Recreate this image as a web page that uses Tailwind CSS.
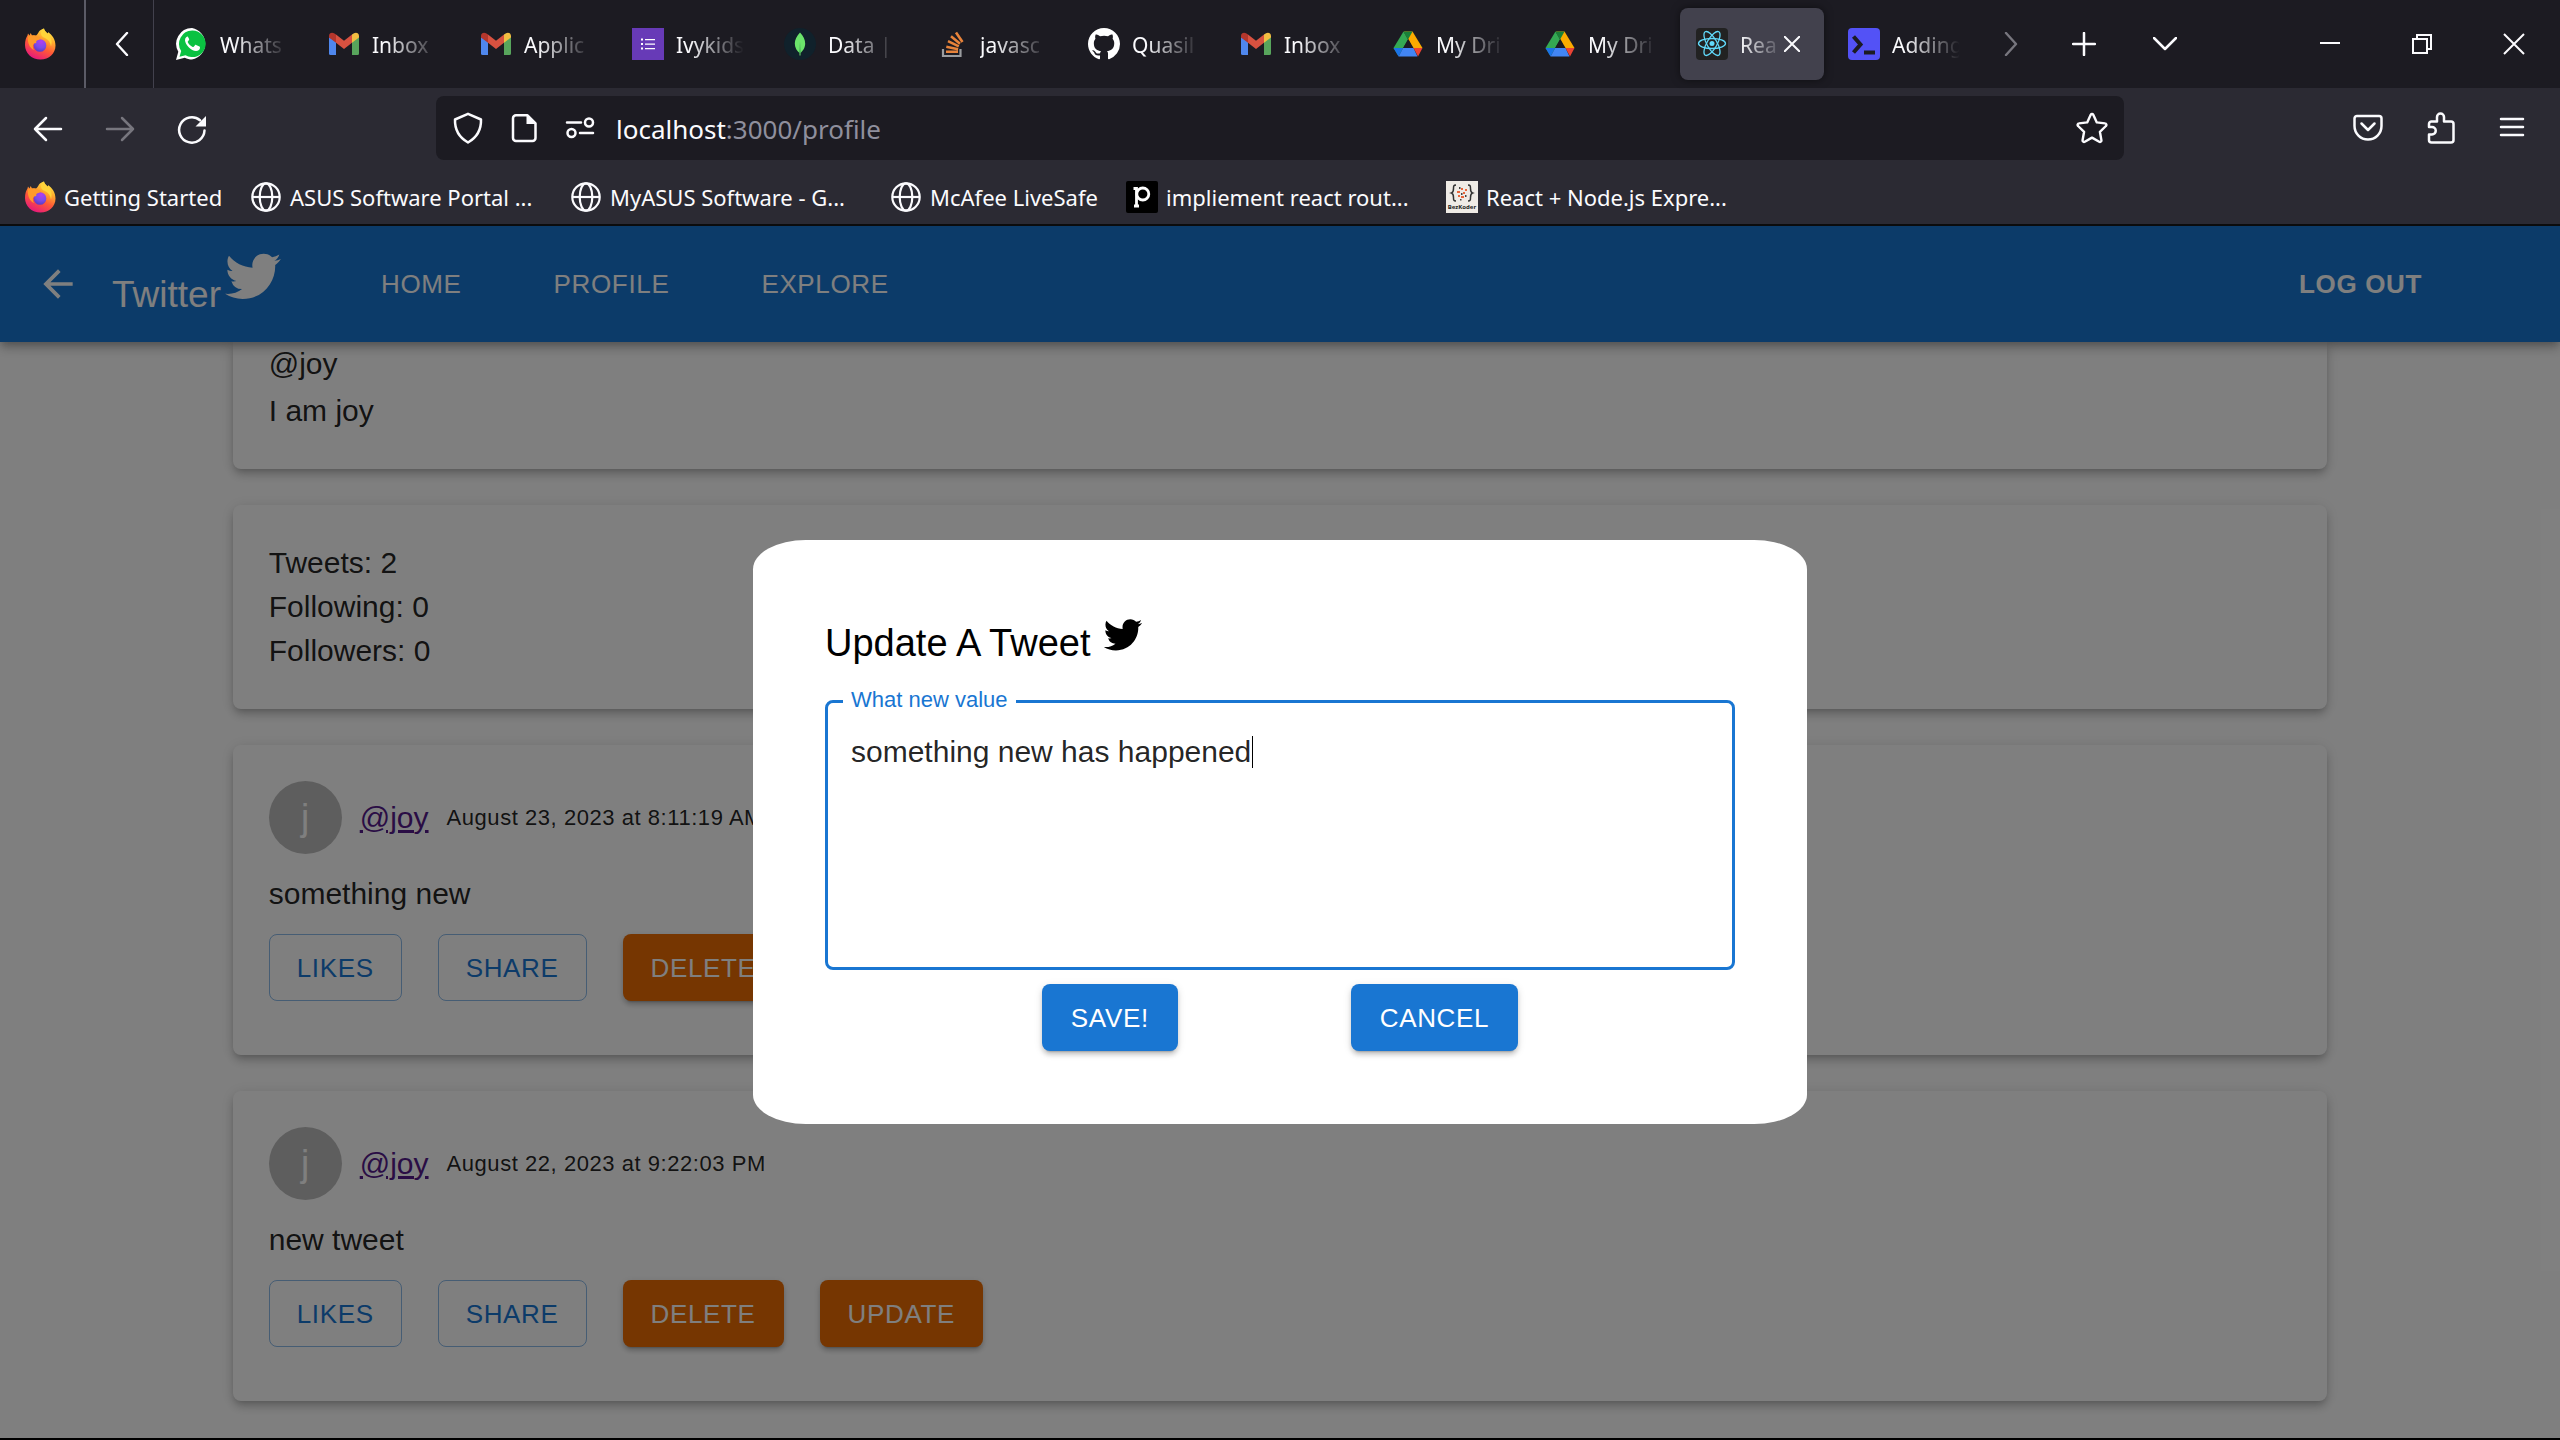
<!DOCTYPE html>
<html lang="en">
<head>
<meta charset="utf-8">
<title>React App</title>
<script src="https://cdn.jsdelivr.net/npm/@tailwindcss/browser@4"></script>
</head>
<body class="flex h-screen flex-col overflow-hidden bg-black font-['Liberation_Sans',Arial,sans-serif]">

<svg class="absolute size-0" aria-hidden="true">
  <defs>
    <linearGradient id="ff-body" x1="0.8" y1="0" x2="0.3" y2="1">
      <stop offset="0" stop-color="#fff44f"/><stop offset="0.3" stop-color="#ffb02e"/><stop offset="0.6" stop-color="#ff5a36"/><stop offset="1" stop-color="#e5157f"/>
    </linearGradient>
    <radialGradient id="ff-core" cx="0.6" cy="0.2" r="0.8">
      <stop offset="0" stop-color="#b23df0"/><stop offset="0.6" stop-color="#7a4be8"/><stop offset="1" stop-color="#5b3bc4"/>
    </radialGradient>
  </defs>
  <symbol id="firefox" viewBox="0 0 32 32">
    <path fill="url(#ff-body)" d="M20 .5c.3 2 1.800 3.300 3.500 5 .6-.4.700-1 .6-1.600 4 2.800 7.400 7.500 7.400 13.600C31.500 25.500 25 31.500 16.500 31.500S1 25.500 1 17c0-4.500 1.200-7.500 2.500-9.500l.5-2 1.500 2 1.200-2.500L8 7.500C9.500 7 11 7 12 7.500c1.500-.8 2-2.500 3-4 1-1.500 3-2.500 5-3z"/>
    <circle cx="16" cy="17.500" r="6.300" fill="url(#ff-core)"/>
    <path fill="#ff9a2a" d="M4 8.500c3-1.500 6-1.500 8.500 0 2 .3 3.500.3 4.500 1.200-.3 1.800-2.500 2-4 2.700-1 .5-1 1.800-.5 2.600-1.500-.2-3 .5-3.500 2-.4 1.500 0 3.500 1 5C6 20.500 3 14.500 4 8.500z"/>
    <path fill="#ffd43a" d="M20 .5c.3 2 1.800 3.500 3.500 5 4 3.500 5 8 3.500 13-.5-4-2.500-7-6-8.500-2.500-1-4-2.500-4-4.500 0-2.200 1-4 3-5z"/>
  </symbol>
  <symbol id="gmail" viewBox="0 0 32 32">
    <path fill="#4f87ed" d="M1 9v16.500a1.500 1.500 0 0 0 1.500 1.500H8V13.500z"/>
    <path fill="#58a55c" d="M31 9v16.500a1.500 1.500 0 0 1-1.500 1.500H24V13.500z"/>
    <path fill="#d75140" d="M8 6.500l8 6.300 8-6.300v8.300l-8 6.300-8-6.300z"/>
    <path fill="#b3362c" d="M1 9.500V8c0-3 3-4 5-2.700L8 6.500v8.300z"/>
    <path fill="#f2be42" d="M31 9.500V8c0-3-3-4-5-2.700l-2 1.200v8.300z"/>
  </symbol>
  <symbol id="drive" viewBox="0 0 32 32">
    <path fill="#fbab00" d="M20.500 3.500L30.500 20h-9L12 3.500z" />
    <path fill="#34a853" d="M11.500 3.500L16 11.500 6.500 28 1.500 20z"/>
    <path fill="#188038" d="M11.500 3.500h9L16 11.500z"/>
    <path fill="#1c1b22" d="M16 11.500L20.800 20h-9.600z"/>
    <path fill="#4285f4" d="M11 20h10.500l4 8.500h-19z"/>
    <path fill="#1a73e8" d="M1.500 20H11l-4.500 8.500z"/>
    <path fill="#ea4335" d="M30.500 20h-9l4.500 8.500z"/>
  </symbol>
  <symbol id="globe" viewBox="0 0 32 32">
    <g fill="none" stroke="#fbfbfe" stroke-width="2.200"><circle cx="16" cy="16" r="13.700"/><ellipse cx="16" cy="16" rx="6.300" ry="13.700"/><path d="M2.500 16h27"/></g>
  </symbol>
  <symbol id="bird" viewBox="0 0 24 24">
    <path d="M22.460 6c-.77.35-1.600.58-2.460.69.88-.53 1.560-1.370 1.880-2.380-.83.5-1.750.85-2.720 1.050C18.370 4.500 17.260 4 16 4c-2.350 0-4.270 1.920-4.270 4.290 0 .34.04.67.11.98C8.280 9.090 5.110 7.380 3 4.790c-.37.63-.58 1.370-.58 2.150 0 1.490.75 2.810 1.910 3.560-.71 0-1.370-.2-1.950-.5v.03c0 2.080 1.480 3.820 3.440 4.210a4.220 4.220 0 0 1-1.930.07 4.280 4.280 0 0 0 4 2.980 8.521 8.521 0 0 1-5.330 1.840c-.34 0-.68-.02-1.020-.06C3.440 20.290 5.700 21 8.120 21 16 21 20.330 14.460 20.330 8.790c0-.19 0-.37-.01-.56.84-.6 1.560-1.360 2.140-2.230z"/>
  </symbol>
</svg>

<!-- Browser window: tab strip, address bar, bookmarks -->
<header class="shrink-0 border-b-2 border-[#0c0c0d] bg-[#2b2a33] font-['Noto_Sans','Open_Sans',sans-serif] text-[#fbfbfe]">
  <div class="flex h-[88px] items-stretch bg-[#1c1b22]">
    <button class="flex w-[86px] items-center border-r-2 border-[#5b5b66] pl-6" aria-label="Firefox View"><svg class="size-8"><use href="#firefox"/></svg></button>
    <button class="flex w-[68px] items-center justify-center border-r border-[#42414d] pl-1" aria-label="Scroll tabs left"><svg class="h-6 w-4" viewBox="0 0 16 24" fill="none" stroke="currentColor" stroke-width="2.400" stroke-linecap="round" stroke-linejoin="round"><path d="M13 1L3 12l10 11"/></svg></button>
    <nav class="ml-1.5 flex items-center gap-2 text-[21px] leading-8" aria-label="Tabs">
      <a href="#" class="flex h-[72px] w-36 items-center gap-3 pl-4">
        <svg class="size-8 shrink-0" viewBox="0 0 32 32"><path fill="#fff" d="M16 0a16 16 0 0 1 0 31.500c-2.600 0-5-.6-7.200-1.800L0 32l2.300-8.300A15.800 15.800 0 0 1 16 0z"/><path fill="#0ac241" d="M16.200 2.500a13.300 13.300 0 1 1-6.700 24.700l-6 1.500 1.700-5.700A13.300 13.300 0 0 1 16.200 2.500z"/><path fill="#fff" d="M11.600 8.500c-.8 0-2.600 1.200-2.600 3.800 0 4 6.300 10.800 11 10.800 2.500 0 4-1.500 4-3.600 0-.6-.2-.8-.6-1l-3.300-1.600c-.5-.2-.8-.1-1.100.3l-1.300 1.600c-.3.3-.6.3-1 .1-2.200-1-3.900-2.700-4.900-4.600-.2-.4-.1-.7.2-1l1-1.300c.2-.3.200-.6.100-.9l-1.200-2.300c-.1-.3-.2-.3-.3-.3z"/></svg>
        <span class="w-[68px] pt-0.5 whitespace-nowrap mask-r-from-20% mask-r-to-100%">Whats</span></a>
      <a href="#" class="flex h-[72px] w-36 items-center gap-3 pl-4"><svg class="size-8 shrink-0"><use href="#gmail"/></svg><span class="w-[68px] pt-0.5 whitespace-nowrap mask-r-from-20% mask-r-to-100%">Inbox</span></a>
      <a href="#" class="flex h-[72px] w-36 items-center gap-3 pl-4"><svg class="size-8 shrink-0"><use href="#gmail"/></svg><span class="w-[68px] pt-0.5 whitespace-nowrap mask-r-from-20% mask-r-to-100%">Applic</span></a>
      <a href="#" class="flex h-[72px] w-36 items-center gap-3 pl-4">
        <svg class="size-8 shrink-0" viewBox="0 0 32 32"><path fill="#673ab7" d="M0 0h32v32H0z"/><path fill="#fff" d="M9 10.500h2v2H9zM9 15h2v2H9zM9 19.500h2v2H9zM13 11h10v1.300H13zM13 15.500h10v1.300H13zM13 20h10v1.300H13z"/></svg>
        <span class="w-[68px] pt-0.5 whitespace-nowrap mask-r-from-20% mask-r-to-100%">Ivykids</span></a>
      <a href="#" class="flex h-[72px] w-36 items-center gap-3 pl-4">
        <svg class="size-8 shrink-0" viewBox="0 0 32 32"><circle cx="16" cy="16" r="16" fill="#10212b"/><path fill="#6be46b" d="M16 4.500c3.500 4 5.200 7 5.200 11 0 4.500-2.500 7.500-4.700 9.500V27.500h-1V25c-2.400-2-4.700-5-4.700-9.500 0-4 1.900-7 5.200-11z"/><path fill="#3a9a52" d="M16 14l.6 11h-1.200z"/></svg>
        <span class="w-[68px] pt-0.5 whitespace-nowrap mask-r-from-20% mask-r-to-100%">Data |</span></a>
      <a href="#" class="flex h-[72px] w-36 items-center gap-3 pl-4">
        <svg class="size-8 shrink-0" viewBox="0 0 32 32"><path fill="none" stroke="#9a9c9f" stroke-width="2.200" d="M7 21v7h17.500v-7"/><g stroke="#e8833a" stroke-width="2.600"><path d="M10 23.700h12M10.300 18.800l11.800 2.400M12 13.200l10.800 5.200M15 8.300l9 7.400M20 4.500l6.500 9.500"/></g></svg>
        <span class="w-[68px] pt-0.5 whitespace-nowrap mask-r-from-20% mask-r-to-100%">javasc</span></a>
      <a href="#" class="flex h-[72px] w-36 items-center gap-3 pl-4">
        <svg class="size-8 shrink-0" viewBox="0 0 16 16"><path fill="#fff" d="M8 0C3.580 0 0 3.580 0 8c0 3.540 2.290 6.530 5.470 7.590.4.07.55-.17.55-.38 0-.19-.01-.82-.01-1.490-2.010.37-2.530-.49-2.690-.94-.09-.23-.48-.94-.82-1.130-.28-.15-.68-.52-.01-.53.63-.01 1.080.58 1.230.82.72 1.210 1.870.87 2.330.66.07-.52.28-.87.51-1.070-1.780-.2-3.640-.89-3.640-3.950 0-.87.31-1.590.82-2.150-.08-.2-.36-1.020.08-2.120 0 0 .67-.21 2.200.82.64-.18 1.320-.27 2-.27s1.360.09 2 .27c1.530-1.040 2.200-.82 2.200-.82.44 1.100.16 1.920.08 2.120.51.56.82 1.270.82 2.150 0 3.070-1.870 3.750-3.650 3.950.29.25.54.73.54 1.480 0 1.070-.01 1.930-.01 2.200 0 .21.15.46.55.38A8.010 8.010 0 0 0 16 8c0-4.420-3.580-8-8-8z"/></svg>
        <span class="w-[68px] pt-0.5 whitespace-nowrap mask-r-from-20% mask-r-to-100%">Quasil</span></a>
      <a href="#" class="flex h-[72px] w-36 items-center gap-3 pl-4"><svg class="size-8 shrink-0"><use href="#gmail"/></svg><span class="w-[68px] pt-0.5 whitespace-nowrap mask-r-from-20% mask-r-to-100%">Inbox</span></a>
      <a href="#" class="flex h-[72px] w-36 items-center gap-3 pl-4"><svg class="size-8 shrink-0"><use href="#drive"/></svg><span class="w-[68px] pt-0.5 whitespace-nowrap mask-r-from-20% mask-r-to-100%">My Dri</span></a>
      <a href="#" class="flex h-[72px] w-36 items-center gap-3 pl-4"><svg class="size-8 shrink-0"><use href="#drive"/></svg><span class="w-[68px] pt-0.5 whitespace-nowrap mask-r-from-20% mask-r-to-100%">My Dri</span></a>
      <div class="flex h-[72px] w-36 items-center rounded-lg bg-[#42414d] pl-4 shadow-[0_0_8px_rgba(0,0,0,0.5)]">
        <svg class="mr-3 size-8 shrink-0" viewBox="0 0 32 32"><rect width="32" height="32" rx="4" fill="#222"/><circle cx="16" cy="15.500" r="2.500" fill="#61dafb"/><g fill="none" stroke="#61dafb" stroke-width="1.300"><ellipse cx="16" cy="15.500" rx="13.500" ry="5"/><ellipse cx="16" cy="15.500" rx="13.500" ry="5" transform="rotate(60 16 15.500)"/><ellipse cx="16" cy="15.500" rx="13.500" ry="5" transform="rotate(120 16 15.500)"/></g></svg>
        <a href="#" class="w-9 pt-0.5 whitespace-nowrap mask-r-from-0% mask-r-to-120%">Rea</a>
        <button class="ml-2" aria-label="Close tab"><svg class="size-4" viewBox="0 0 16 16" stroke="currentColor" stroke-width="2"><path d="M0 0l16 16M16 0L0 16"/></svg></button>
      </div>
      <a href="#" class="flex h-[72px] w-36 items-center gap-3 pl-4">
        <svg class="size-8 shrink-0" viewBox="0 0 32 32"><rect width="32" height="32" rx="4" fill="#5352f6"/><path fill="none" stroke="#1c1b22" stroke-width="4" d="M5.500 8.500l7 8-7 8"/><path fill="#1c1b22" d="M16 22.500h11v4H16z"/></svg>
        <span class="w-[68px] pt-0.5 whitespace-nowrap mask-r-from-20% mask-r-to-100%">Adding</span></a>
    </nav>
    <button class="flex w-[70px] items-center justify-center text-[#77767e]" aria-label="Scroll tabs right"><svg class="h-6 w-4" viewBox="0 0 16 24" fill="none" stroke="currentColor" stroke-width="2.400" stroke-linecap="round" stroke-linejoin="round"><path d="M3 1l10 11L3 23"/></svg></button>
    <button class="flex w-[76px] items-center justify-center" aria-label="New tab"><svg class="size-6" viewBox="0 0 24 24" stroke="currentColor" stroke-width="2.500" stroke-linecap="round"><path d="M12 1v22M1 12h22"/></svg></button>
    <button class="flex w-[86px] items-center justify-center" aria-label="List all tabs"><svg class="h-3.5 w-6" viewBox="0 0 24 14" fill="none" stroke="currentColor" stroke-width="2.500" stroke-linecap="round" stroke-linejoin="round"><path d="M1 1l11 11L23 1"/></svg></button>
    <div class="ml-auto flex">
      <button class="flex w-[92px] items-center justify-center" aria-label="Minimize"><svg class="size-5" viewBox="0 0 20 20" stroke="currentColor" stroke-width="2"><path d="M0 9h20"/></svg></button>
      <button class="flex w-[92px] items-center justify-center" aria-label="Restore"><svg class="size-5" viewBox="0 0 20 20" fill="none" stroke="currentColor" stroke-width="2"><path d="M1 5h14v14H1zM5 5V1h14v14h-4"/></svg></button>
      <button class="flex w-[92px] items-center justify-center" aria-label="Close window"><svg class="size-[22px]" viewBox="0 0 22 22" stroke="currentColor" stroke-width="2"><path d="M1 1l20 20M21 1L1 21"/></svg></button>
    </div>
  </div>

  <div class="flex h-20 items-center px-8">
    <div class="flex w-[404px] items-center gap-10 pt-0.5">
      <button aria-label="Back"><svg class="size-8" viewBox="0 0 32 32" fill="none" stroke="currentColor" stroke-width="2.500" stroke-linecap="round" stroke-linejoin="round"><path d="M29 16H3M14 5L3 16l11 11"/></svg></button>
      <button class="text-[#77767e]" aria-label="Forward"><svg class="size-8" viewBox="0 0 32 32" fill="none" stroke="currentColor" stroke-width="2.500" stroke-linecap="round" stroke-linejoin="round"><path d="M3 16h26M18 5l11 11-11 11"/></svg></button>
      <button aria-label="Reload"><svg class="size-8" viewBox="0 0 32 32"><path fill="none" stroke="currentColor" stroke-width="2.500" stroke-linecap="round" d="M28.500 17.500A12.700 12.700 0 1 1 24 7.200"/><path fill="currentColor" d="M30 3v10.500H19.500z"/></svg></button>
    </div>
    <div class="flex h-16 w-[1688px] items-center rounded-lg bg-[#1c1b22] px-4">
      <svg class="mr-6 size-8" viewBox="0 0 32 32" fill="none" stroke="currentColor" stroke-width="2.500" stroke-linejoin="round"><path d="M16 1.800l13 5.700c.3 9.500-2.500 17-13 23C5.500 24.500 2.700 17 3 7.500z"/></svg>
      <svg class="mr-6 size-8" viewBox="0 0 32 32"><path fill="none" stroke="currentColor" stroke-width="2.500" stroke-linejoin="round" d="M8 3.300h11.500l8 8V26a3 3 0 0 1-3 3H8a3 3 0 0 1-3-3V6.300a3 3 0 0 1 3-3z"/><path fill="currentColor" d="M18.500 2.500l9.500 9.500h-9.500z"/></svg>
      <svg class="mr-5 size-8" viewBox="0 0 32 32" fill="none" stroke="currentColor" stroke-width="2.500" stroke-linecap="round"><path d="M3 10.500h14M16 21h13"/><circle cx="25" cy="10.500" r="4"/><circle cx="7.500" cy="21" r="4"/></svg>
      <a href="#" class="flex-1 pt-0.5 text-[26px] leading-9">localhost<span class="text-[#8f8f9d]">:3000/profile</span></a>
      <button aria-label="Bookmark this page"><svg class="size-8" viewBox="0 0 32 32" fill="none" stroke="currentColor" stroke-width="2.400" stroke-linejoin="round"><path d="M14.700 2.800a1.500 1.500 0 0 1 2.600 0l3.500 7.600 8.200 1a1.500 1.500 0 0 1 .9 2.600l-6 5.800 1.500 8.300a1.500 1.500 0 0 1-2.200 1.600L16 25.600l-7.200 4.100a1.500 1.500 0 0 1-2.200-1.600l1.500-8.300-6-5.800a1.500 1.500 0 0 1 .9-2.600l8.200-1z"/></svg></button>
    </div>
    <div class="ml-auto flex items-center gap-10">
      <button aria-label="Save to Pocket"><svg class="size-8" viewBox="0 0 32 32" fill="none" stroke="currentColor" stroke-width="2.500" stroke-linecap="round" stroke-linejoin="round"><path d="M5 4h22a2.500 2.500 0 0 1 2.500 2.500V14a13.500 13.500 0 0 1-27 0V6.500A2.500 2.500 0 0 1 5 4zM9.500 11.500l6.500 6.500 6.500-6.500"/></svg></button>
      <button aria-label="Extensions"><svg class="size-8" viewBox="0 0 32 32" fill="none" stroke="currentColor" stroke-width="2.500" stroke-linejoin="round"><path d="M5 15V12a2.500 2.500 0 0 1 2.500-2.500H13V5a3.500 3.500 0 0 1 7 0v4.500h7a2.500 2.500 0 0 1 2.500 2.500v16a2.500 2.500 0 0 1-2.500 2.500H7.500A2.500 2.500 0 0 1 5 28v-5.500h3a3.700 3.700 0 0 0 0-7.500z"/></svg></button>
      <button aria-label="Menu"><svg class="size-8" viewBox="0 0 32 32" stroke="currentColor" stroke-width="2.500" stroke-linecap="round"><path d="M5 7h22M5 15h22M5 23h22"/></svg></button>
    </div>
  </div>

  <nav class="flex h-14 items-center px-6 pt-0.5 text-[22px] leading-8 whitespace-nowrap" aria-label="Bookmarks">
    <a href="#" class="flex w-[226px] items-center gap-2"><svg class="size-8 shrink-0"><use href="#firefox"/></svg>Getting Started</a>
    <a href="#" class="flex w-80 items-center gap-2"><svg class="size-8 shrink-0"><use href="#globe"/></svg>ASUS Software Portal ...</a>
    <a href="#" class="flex w-80 items-center gap-2"><svg class="size-8 shrink-0"><use href="#globe"/></svg>MyASUS Software - G...</a>
    <a href="#" class="flex w-[236px] items-center gap-2"><svg class="size-8 shrink-0"><use href="#globe"/></svg>McAfee LiveSafe</a>
    <a href="#" class="flex w-80 items-center gap-2"><svg class="size-8 shrink-0" viewBox="0 0 32 32"><rect width="32" height="32" rx="2" fill="#000"/><path fill="none" stroke="#fff" stroke-width="2.800" d="M7.500 7.500h3V26M8 25h5"/><ellipse cx="16.800" cy="13" rx="6" ry="6" fill="none" stroke="#fff" stroke-width="2.800"/></svg>impliement react rout...</a>
    <a href="#" class="flex items-center gap-2"><svg class="size-8 shrink-0" viewBox="0 0 32 32"><path fill="#efebe6" d="M0 0h32v32H0z"/><g fill="none" stroke="#333" stroke-width="1.500"><path d="M10 4c-2.500 0-2.500 1-2.500 3.500S7 11.500 5.500 12c1.500.5 2 2 2 4.500S7.500 20 10 20M22 4c2.500 0 2.500 1 2.500 3.500s.5 4 2 4.500c-1.500.5-2 2-2 4.500S24.500 20 22 20"/></g><path fill="#e8663c" d="M11 10h3v2h-3zM15 7h2v2h-2zM17 11h2v2h-2zM12 14h2v2h-2zM15 15h3v2h-3zM19 8h2v2h-2z"/><path fill="#444" d="M13 6h1.500v2H13zM15 12h1.500v2H15zM19 14h1.500v2H19zM14 18h1.500v1.500H14z"/><text x="16" y="28" text-anchor="middle" font-size="6" font-weight="700" fill="#222">BezKoder</text></svg>React + Node.js Expre...</a>
  </nav>
</header>

<!-- Web page -->
<main class="relative mb-0.5 flex flex-1 flex-col overflow-hidden bg-white text-black/87">
  <div class="relative z-10 flex h-[116px] shrink-0 items-center bg-[#1976d2] pr-[138px] pl-9 text-white shadow-[0_4px_7px_-2px_rgba(0,0,0,0.2),0_7px_9px_0_rgba(0,0,0,0.14),0_2px_18px_0_rgba(0,0,0,0.12)]">
    <button class="mr-8" aria-label="Go back"><svg class="size-11" viewBox="0 0 24 24" fill="currentColor"><path d="M20 11H7.830l5.590-5.590L12 4l-8 8 8 8 1.410-1.410L7.830 13H20v-2z"/></svg></button>
    <a href="#" class="flex items-end pb-[18px] text-[37px] leading-10"><span class="-mb-2">Twitter</span><svg class="size-16 fill-current"><use href="#bird"/></svg></a>
    <nav class="ml-24 flex gap-[92px] text-[26px] leading-11 tracking-wide">
      <a href="#">HOME</a><a href="#">PROFILE</a><a href="#">EXPLORE</a>
    </nav>
    <button class="ml-auto text-[26px] leading-11 font-bold tracking-wide">LOG OUT</button>
  </div>

  <div class="mx-auto flex w-9/11 flex-col gap-9 text-[30px] leading-11">
    <section class="flex flex-col gap-[3px] rounded-b-lg bg-white px-9 pb-9 shadow-[0_4px_6px_-4px_rgba(0,0,0,0.2),0_6px_8px_0_rgba(0,0,0,0.14),0_2px_15px_0_rgba(0,0,0,0.12)]">
      <p>@joy</p>
      <p>I am joy</p>
    </section>
    <section class="rounded-lg bg-white p-9 shadow-[0_4px_6px_-4px_rgba(0,0,0,0.2),0_6px_8px_0_rgba(0,0,0,0.14),0_2px_15px_0_rgba(0,0,0,0.12)]">
      <p>Tweets: 2</p>
      <p>Following: 0</p>
      <p>Followers: 0</p>
    </section>
    <article class="flex flex-col gap-[18px] rounded-lg bg-white px-9 pt-9 pb-[54px] shadow-[0_4px_6px_-4px_rgba(0,0,0,0.2),0_6px_8px_0_rgba(0,0,0,0.14),0_2px_15px_0_rgba(0,0,0,0.12)]">
      <div class="flex items-center gap-[18px]">
        <span class="flex size-[73px] items-center justify-center rounded-full bg-[#bdbdbd] text-[37px] text-white">j</span>
        <a href="#" class="text-[#551a8b] underline">@joy</a>
        <time class="text-[22px] tracking-wide">August 23, 2023 at 8:11:19 AM</time>
      </div>
      <p>something new</p>
      <div class="flex gap-9 text-[26px] tracking-wide">
        <button class="h-[67px] rounded-lg border border-[#1976d2]/50 px-[27px] text-[#1976d2]">LIKES</button>
        <button class="h-[67px] rounded-lg border border-[#1976d2]/50 px-[27px] text-[#1976d2]">SHARE</button>
        <button class="h-[67px] rounded-lg bg-[#ed6c02] px-7 text-white shadow-[0_5px_2px_-4px_rgba(0,0,0,0.2),0_4px_4px_0_rgba(0,0,0,0.14),0_2px_9px_0_rgba(0,0,0,0.12)]">DELETE</button>
        <button class="h-[67px] rounded-lg bg-[#ed6c02] px-7 text-white shadow-[0_5px_2px_-4px_rgba(0,0,0,0.2),0_4px_4px_0_rgba(0,0,0,0.14),0_2px_9px_0_rgba(0,0,0,0.12)]">UPDATE</button>
      </div>
    </article>
    <article class="flex flex-col gap-[18px] rounded-lg bg-white px-9 pt-9 pb-[54px] shadow-[0_4px_6px_-4px_rgba(0,0,0,0.2),0_6px_8px_0_rgba(0,0,0,0.14),0_2px_15px_0_rgba(0,0,0,0.12)]">
      <div class="flex items-center gap-[18px]">
        <span class="flex size-[73px] items-center justify-center rounded-full bg-[#bdbdbd] text-[37px] text-white">j</span>
        <a href="#" class="text-[#551a8b] underline">@joy</a>
        <time class="text-[22px] tracking-wide">August 22, 2023 at 9:22:03 PM</time>
      </div>
      <p>new tweet</p>
      <div class="flex gap-9 text-[26px] tracking-wide">
        <button class="h-[67px] rounded-lg border border-[#1976d2]/50 px-[27px] text-[#1976d2]">LIKES</button>
        <button class="h-[67px] rounded-lg border border-[#1976d2]/50 px-[27px] text-[#1976d2]">SHARE</button>
        <button class="h-[67px] rounded-lg bg-[#ed6c02] px-7 text-white shadow-[0_5px_2px_-4px_rgba(0,0,0,0.2),0_4px_4px_0_rgba(0,0,0,0.14),0_2px_9px_0_rgba(0,0,0,0.12)]">DELETE</button>
        <button class="h-[67px] rounded-lg bg-[#ed6c02] px-7 text-white shadow-[0_5px_2px_-4px_rgba(0,0,0,0.2),0_4px_4px_0_rgba(0,0,0,0.14),0_2px_9px_0_rgba(0,0,0,0.12)]">UPDATE</button>
      </div>
    </article>
  </div>

  <!-- Update dialog over the dimmed page -->
  <div class="absolute inset-0 z-20 flex items-center justify-center bg-black/50">
    <form class="w-[1054px] rounded-[5%] bg-white px-[72px] pt-[72px] pb-[73px]" role="dialog" aria-labelledby="dialog-title">
      <h2 id="dialog-title" class="h-[59px] text-[38px] leading-[59px] text-black">Update A Tweet <svg class="inline size-11 fill-current align-baseline"><use href="#bird"/></svg></h2>
      <div class="relative mt-[29px]">
        <label for="tweet" class="absolute -top-4 left-[18px] bg-white px-2 text-[22px] leading-8 text-[#1976d2]">What new value</label>
        <textarea id="tweet" class="block h-[270px] w-full resize-none rounded-lg border-3 border-[#1976d2] px-[23px] py-[27px] text-[30px] leading-11 outline-none">something new has happened</textarea>
        <span class="absolute top-9 left-[427px] h-8 w-px bg-black"></span>
      </div>
      <div class="mt-3.5 flex justify-center gap-[173px] text-[26px] leading-11 tracking-wide text-white">
        <button type="submit" class="h-[67px] rounded-lg bg-[#1976d2] px-[29px] shadow-[0_5px_2px_-4px_rgba(0,0,0,0.2),0_4px_4px_0_rgba(0,0,0,0.14),0_2px_9px_0_rgba(0,0,0,0.12)]">SAVE!</button>
        <button type="button" class="h-[67px] rounded-lg bg-[#1976d2] px-[29px] shadow-[0_5px_2px_-4px_rgba(0,0,0,0.2),0_4px_4px_0_rgba(0,0,0,0.14),0_2px_9px_0_rgba(0,0,0,0.12)]">CANCEL</button>
      </div>
    </form>
  </div>
</main>
</body>
</html>
